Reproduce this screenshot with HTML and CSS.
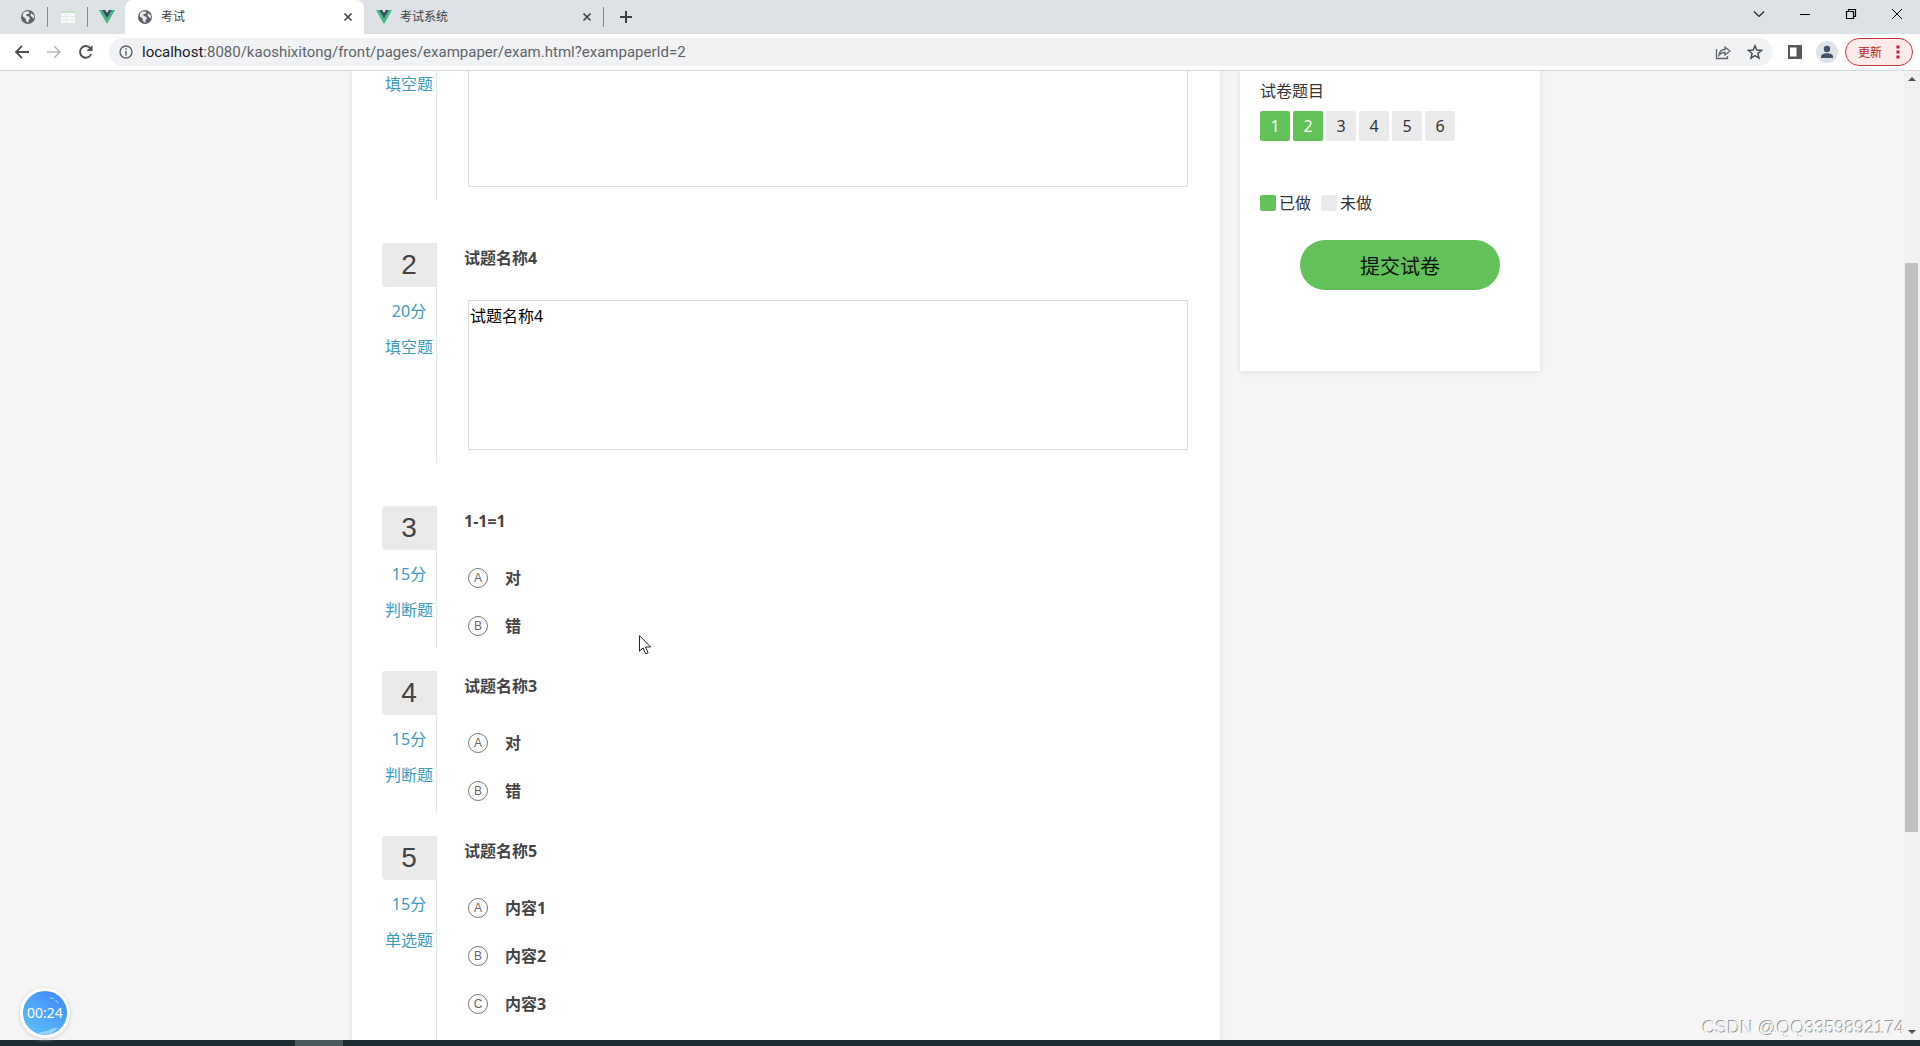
FILE: index.html
```html
<!DOCTYPE html>
<html lang="zh-CN">
<head>
<meta charset="utf-8">
<title>考试</title>
<link rel="stylesheet" href="styles.css">
</head>
<body>
<svg class="defs" aria-hidden="true">
  <symbol id="globe" viewBox="0 0 16 16"><circle cx="8" cy="8" r="7" fill="#5f6368"/><path d="M3 4.500C4.500 2 8 1.800 9.500 3L8.500 5H6.500v2l2.500.500 1 2-1.500 1.500v2.500C6 13.500 6 11 5.500 9.500L2.600 7.200zM11 4l3 2.500v3l-2.200-1.500-1.300-1.800z" fill="#e6e9ed"/></symbol>
  <symbol id="vue" viewBox="0 0 16 14"><path d="M0 0h3.200L8 8.300 12.800 0H16L8 14z" fill="#41b883"/><path d="M3.200 0h3L8 3.200 9.800 0h3L8 8.300z" fill="#34495e"/></symbol>
  <symbol id="cross" viewBox="0 0 10 10"><path d="M1.500 1.500l7 7m0-7l-7 7" stroke="#3c4043" stroke-width="1.600"/></symbol>
</svg>
<div class="browser">
  <header class="tabs">
    <div class="pinned"><svg class="icon"><use href="#globe"/></svg></div>
    <div class="pinned"><svg class="icon" viewBox="0 0 16 16"><path d="M1 3h14v11H1z" fill="#f7f9f8"/><path d="M1 3h14" stroke="#b9dcc3" stroke-width="1.500"/><path d="M1 7.500h14M1 11h14M6 3v11" stroke="#e2ebe6"/></svg></div>
    <div class="pinned pinned-last"><svg class="icon"><use href="#vue"/></svg></div>
    <div class="tab tab-active"><svg class="icon"><use href="#globe"/></svg><span class="tab-title">考试</span><button class="plain" aria-label="关闭"><svg class="cross"><use href="#cross"/></svg></button></div>
    <div class="tab"><svg class="icon"><use href="#vue"/></svg><span class="tab-title">考试系统</span><button class="plain" aria-label="关闭"><svg class="cross"><use href="#cross"/></svg></button></div>
    <button class="plain add" aria-label="新标签页"><svg class="icon" viewBox="0 0 16 16"><path d="M8 2v12M2 8h12" stroke="#3c4043" stroke-width="2"/></svg></button>
    <div class="window-buttons">
      <button class="plain" aria-label="搜索标签页"><svg viewBox="0 0 12 12"><path d="M1 3.500l5 5 5-5" fill="none" stroke="#222" stroke-width="1.200"/></svg></button>
      <button class="plain" aria-label="最小化"><svg viewBox="0 0 12 12"><path d="M1 6.500h10" stroke="#000"/></svg></button>
      <button class="plain" aria-label="还原"><svg viewBox="0 0 12 12"><path d="M1.500 3.500h7v7h-7zM3.500 3.500v-2h7v7h-2" fill="none" stroke="#000" stroke-width="1.200"/></svg></button>
      <button class="plain" aria-label="关闭窗口"><svg viewBox="0 0 12 12"><path d="M1 1l10 10M11 1L1 11" stroke="#000"/></svg></button>
    </div>
  </header>
  <nav class="toolbar">
    <button class="plain" aria-label="后退"><svg class="nav-icon" viewBox="0 0 16 16"><path d="M15 8H2M8 2L2 8l6 6" fill="none" stroke="#4b4f54" stroke-width="1.800"/></svg></button>
    <button class="plain" aria-label="前进"><svg class="nav-icon" viewBox="0 0 16 16"><path d="M1 8h13M8 2l6 6-6 6" fill="none" stroke="#b6b9bc" stroke-width="1.600"/></svg></button>
    <button class="plain" aria-label="重新加载"><svg class="nav-icon" viewBox="0 0 16 16"><path d="M13.200 10A5.800 5.800 0 1 1 12.300 4.200" fill="none" stroke="#4b4f54" stroke-width="1.900"/><path d="M14.500 1v6h-6z" fill="#4b4f54"/></svg></button>
    <div class="address">
      <svg class="info" viewBox="0 0 14 14"><circle cx="7" cy="7" r="6" fill="none" stroke="#5f6368" stroke-width="1.400"/><path d="M7 6v4.500M7 3.300v1.500" stroke="#5f6368" stroke-width="1.500"/></svg>
      <span class="url"><span class="host">localhost</span>:8080/kaoshixitong/front/pages/exampaper/exam.html?exampaperId=2</span>
      <button class="plain" aria-label="分享"><svg class="icon" viewBox="0 0 16 16"><path d="M1.500 5v9.500h11V12" fill="none" stroke="#5f6368" stroke-width="1.300"/><path d="M4 11c.500-4 3-5.500 6-5.500V3l5 4-5 4V8.500c-3 0-4.500.500-6 2.500z" fill="none" stroke="#5f6368" stroke-width="1.300"/></svg></button>
      <button class="plain" aria-label="收藏"><svg class="icon" viewBox="0 0 16 16"><path d="M8 1.800l1.800 4.300 4.700.400-3.600 3 1.100 4.600L8 11.700l-4 2.400 1.100-4.600-3.600-3 4.700-.400z" fill="none" stroke="#4b4f54" stroke-width="1.500"/></svg></button>
    </div>
    <button class="plain panel" aria-label="侧边栏"><svg class="icon" viewBox="0 0 16 16"><path d="M1 1h14v14H1z" fill="#55585d"/><path d="M3 3.500h6.500v9H3z" fill="#fff"/></svg></button>
    <button class="plain avatar" aria-label="用户"><svg viewBox="0 0 22 22"><circle cx="11" cy="11" r="11" fill="#dee2e9"/><circle cx="11" cy="8" r="3.200" fill="#46526a"/><path d="M5 17v-1.500c0-4.500 12-4.500 12 0V17z" fill="#46526a"/></svg></button>
    <button class="update">更新<svg class="dots" viewBox="0 0 4 14"><path d="M.500.500h3v3h-3zM.500 5.500h3v3h-3zM.500 10.500h3v3h-3z" fill="#b3262b"/></svg></button>
  </nav>
  <div class="viewport">
    <main class="page">
      <form class="container" id="exam">
        <section class="paper">
          <article class="question question-text question-first">
            <div class="meta"><span class="fact">填空题</span></div>
            <div class="body"><textarea class="answer" aria-label="答案"></textarea></div>
          </article>
          <article class="question question-text">
            <div class="meta"><span class="number">2</span><span class="fact">20分</span><span class="fact">填空题</span></div>
            <div class="body"><label class="name" for="answer2">试题名称4</label><textarea class="answer" id="answer2">试题名称4</textarea></div>
          </article>
          <article class="question">
            <div class="meta"><span class="number">3</span><span class="fact">15分</span><span class="fact">判断题</span></div>
            <div class="body"><h2 class="name">1-1=1</h2>
              <label class="option"><input type="radio" name="q3"><span class="letter">A</span><span>对</span></label>
              <label class="option"><input type="radio" name="q3"><span class="letter">B</span><span>错</span></label>
            </div>
          </article>
          <article class="question">
            <div class="meta"><span class="number">4</span><span class="fact">15分</span><span class="fact">判断题</span></div>
            <div class="body"><h2 class="name">试题名称3</h2>
              <label class="option"><input type="radio" name="q4"><span class="letter">A</span><span>对</span></label>
              <label class="option"><input type="radio" name="q4"><span class="letter">B</span><span>错</span></label>
            </div>
          </article>
          <article class="question">
            <div class="meta"><span class="number">5</span><span class="fact">15分</span><span class="fact">单选题</span></div>
            <div class="body"><h2 class="name">试题名称5</h2>
              <label class="option"><input type="radio" name="q5"><span class="letter">A</span><span>内容1</span></label>
              <label class="option"><input type="radio" name="q5"><span class="letter">B</span><span>内容2</span></label>
              <label class="option"><input type="radio" name="q5"><span class="letter">C</span><span>内容3</span></label>
            </div>
          </article>
        </section>
        <aside class="card">
          <h2 class="card-title">试卷题目</h2>
          <div class="numbers">
            <button type="button" class="jump done">1</button><button type="button" class="jump done">2</button><button type="button" class="jump">3</button><button type="button" class="jump">4</button><button type="button" class="jump">5</button><button type="button" class="jump">6</button>
          </div>
          <div class="legend"><span class="key"><i class="swatch done"></i>已做</span><span class="key"><i class="swatch"></i>未做</span></div>
          <button type="button" class="submit">提交试卷</button>
        </aside>
      </form>
    </main>
    <div class="scrollbar">
      <svg class="arrow" viewBox="0 0 16 16"><path d="M4 10l4-4 4 4z" fill="#505050"/></svg>
      <div class="track"><div class="thumb"></div></div>
      <svg class="arrow" viewBox="0 0 16 16"><path d="M4 6h8l-4 4z" fill="#505050"/></svg>
    </div>
    <div class="recorder"><svg class="gloss" viewBox="0 0 44 44"><path d="M27 7c4 0 6 2 8 5" fill="none" stroke="#b5dcff" stroke-dasharray="4 2"/><path d="M15 42c4-2 9-1 13-4 3-2 5-1 7-1-5 6-13 8-20 5z" fill="#8fd3fb"/></svg><span class="time">00:24</span></div>
    <div class="watermark">CSDN @QQ3359892174</div>
    <svg class="pointer" viewBox="0 0 13 20"><path d="M.500.700v15.600l3.600-3.400 2.600 6 2.400-1-2.600-5.900h5.100z" fill="#fff" stroke="#222"/></svg>
  </div>
  <footer class="taskbar"><div class="task"></div></footer>
</div>
</body>
</html>
```
FILE: styles.css
```css
* { box-sizing: border-box; }
body {
  margin: 0;
  color: #333;
  font: 16px/24px "Noto Sans", "Noto Sans CJK SC", sans-serif;
}
.defs { display: none; }
button, textarea { font-family: inherit; }
.plain { display: grid; place-items: center; padding: 0; border: 0; background: none; }
.icon { width: 16px; height: 16px; }
.browser { display: flex; flex-direction: column; height: 100vh; overflow: hidden; }

/* Tab strip */
.tabs { display: flex; align-items: center; flex: none; height: 34px; padding-left: 8px; background: #dee1e6; }
.pinned { display: grid; place-items: center; width: 40px; height: 20px; border-right: 1px solid #84888d; }
.pinned-last { width: 37px; border: 0; }
.tab { display: flex; align-items: center; width: 239px; height: 34px; padding: 0 11px 0 12px; gap: 8px; }
.tab-active { border-radius: 8px 8px 0 0; background: #fff; }
.tab-title { flex: 1; color: #3c4043; font-size: 12px; }
.cross { width: 10px; height: 10px; }
.add { width: 44px; height: 20px; border-left: 1px solid #84888d; }
.window-buttons { display: flex; align-self: flex-start; margin-left: auto; height: 28px; }
.window-buttons .plain { width: 46px; }
.window-buttons svg { width: 12px; height: 12px; }

/* Toolbar */
.toolbar { display: flex; align-items: center; flex: none; height: 37px; padding: 0 7px 1px 6px; border-bottom: 1px solid #d5d7da; background: #fff; }
.toolbar > .plain { width: 32px; height: 32px; }
.nav-icon { width: 16px; height: 16px; }
.address { display: flex; align-items: center; flex: 1; height: 28px; margin: 0 6px 0 7px; padding: 0 10px; border-radius: 14px; background: #f0f2f4; }
.info { width: 14px; height: 14px; margin-right: 9px; }
.url { flex: 1; color: #5f6368; font: 15px/24px Roboto, "Noto Sans", sans-serif; }
.host { color: #202124; }
.address .plain { width: 32px; }
.address .plain:last-child { width: 16px; margin-left: 8px; }
.avatar svg { width: 22px; height: 22px; }
.update { display: flex; align-items: center; justify-content: space-between; width: 68px; height: 28px; margin-left: 2px; padding: 0 12px; border: 1px solid #c5373c; border-radius: 14px; background: #fcebea; color: #b3262b; font-size: 12px; }
.dots { width: 4px; height: 14px; }

/* Web page */
.viewport { position: relative; display: flex; flex: 1; min-height: 0; }
.page { flex: 1; overflow: hidden; background: #f5f5f5; }
.container { display: flex; align-items: flex-start; gap: 20px; max-width: 1200px; margin: 0 auto; padding-right: 12px; }
.paper { flex: 1; padding: 0 32px 0 30px; background: #fff; box-shadow: 0 0 6px #dcdcdc; }
.question { display: flex; margin-bottom: 23px; }
.question-text { margin-bottom: 43px; }
.meta { display: flex; flex-direction: column; width: 55px; border-right: 1px solid #e8e8e8; }
.number { height: 44px; margin-bottom: 6px; border-radius: 4px 0 0 4px; background: #eaeaea; color: #444; font: 28px/44px "Liberation Sans", sans-serif; text-align: center; }
.fact { color: #3d9bbd; line-height: 36px; text-align: center; }
.body { flex: 1; min-width: 0; padding: 0 0 10px 27px; }
.question-text .body { padding-bottom: 13px; }
.question:last-child .body { padding-bottom: 60px; }
.name { display: block; margin: 0 0 30px; color: #444; font-size: 16px; font-weight: 700; line-height: 30px; }
.question-text .name { margin-bottom: 27px; }
.answer { display: block; width: calc(100% - 4px); height: 150px; margin-left: 4px; padding: 1px; border: 1px solid #ddd; background: #fff; color: #000; font-size: 16px; line-height: 28px; resize: none; }
.question-first .fact { line-height: 26px; }
.question-first .answer { height: 116px; border-top: 0; }
.option { display: grid; grid-template-columns: 20px auto; justify-content: start; align-items: center; column-gap: 17px; height: 24px; margin: 0 0 24px 4px; color: #444; font-weight: 700; }
.option:last-child { margin-bottom: 0; }
.option input { grid-area: 1 / 1; width: 20px; height: 20px; margin: 0; border: 1px solid #777; border-radius: 50%; appearance: none; }
.letter { grid-area: 1 / 1; color: #666; font: 12px/20px "Liberation Sans", sans-serif; text-align: center; }

/* Answer card */
.card { width: 300px; padding: 8px 20px 81px; background: #fff; box-shadow: 0 1px 5px #dcdcdc; }
.card-title { margin: 0 0 8px; font-size: 16px; font-weight: 400; line-height: 24px; }
.numbers { display: flex; gap: 3px; }
.jump { width: 30px; height: 30px; padding: 0; border: 0; border-radius: 2px; background: #eaeaea; color: #333; font-size: 16px; }
.jump.done, .swatch.done { background: #62c158; color: #fff; }
.legend { display: flex; gap: 10px; margin: 50px 0 25px; }
.key { display: flex; align-items: center; gap: 3px; }
.swatch { width: 16px; height: 16px; border-radius: 2px; background: #eaeaea; }
.submit { display: block; width: 200px; height: 50px; margin-left: 40px; border: 0; border-radius: 25px; background: #62c158; color: #111; font-size: 20px; }

/* Scroll bar */
.scrollbar { display: flex; flex-direction: column; width: 16px; background: #f1f1f1; }
.arrow { width: 16px; height: 16px; }
.track { display: grid; flex: 1; grid-template-rows: 176fr 568fr 192fr; }
.thumb { grid-row: 2; margin: 0 2px 0 1px; background: #c1c1c1; }

/* Floating layers */
.recorder { position: absolute; bottom: 2px; left: 20px; display: grid; place-items: center; width: 50px; height: 50px; border: 3px solid #fff; border-radius: 50%; background: linear-gradient(35deg, #5fc4fa, #3f86f7); box-shadow: 0 1px 4px #ccc; color: #fff; }
.gloss { grid-area: 1 / 1; width: 44px; height: 44px; }
.time { grid-area: 1 / 1; font: 14px/20px "Noto Sans", sans-serif; }
.watermark { position: absolute; right: 15px; bottom: 0; color: #f4f4f4; font: 18px/24px "Liberation Sans", sans-serif; text-shadow: -1px -1px 0 #999; }
.pointer { position: absolute; top: 564px; left: 639px; width: 13px; height: 20px; }

.taskbar { display: flex; flex: none; height: 6px; padding: 0 4px 0 295px; background: #1b2d33; }
.task { width: 48px; background: #4a595b; }
```
